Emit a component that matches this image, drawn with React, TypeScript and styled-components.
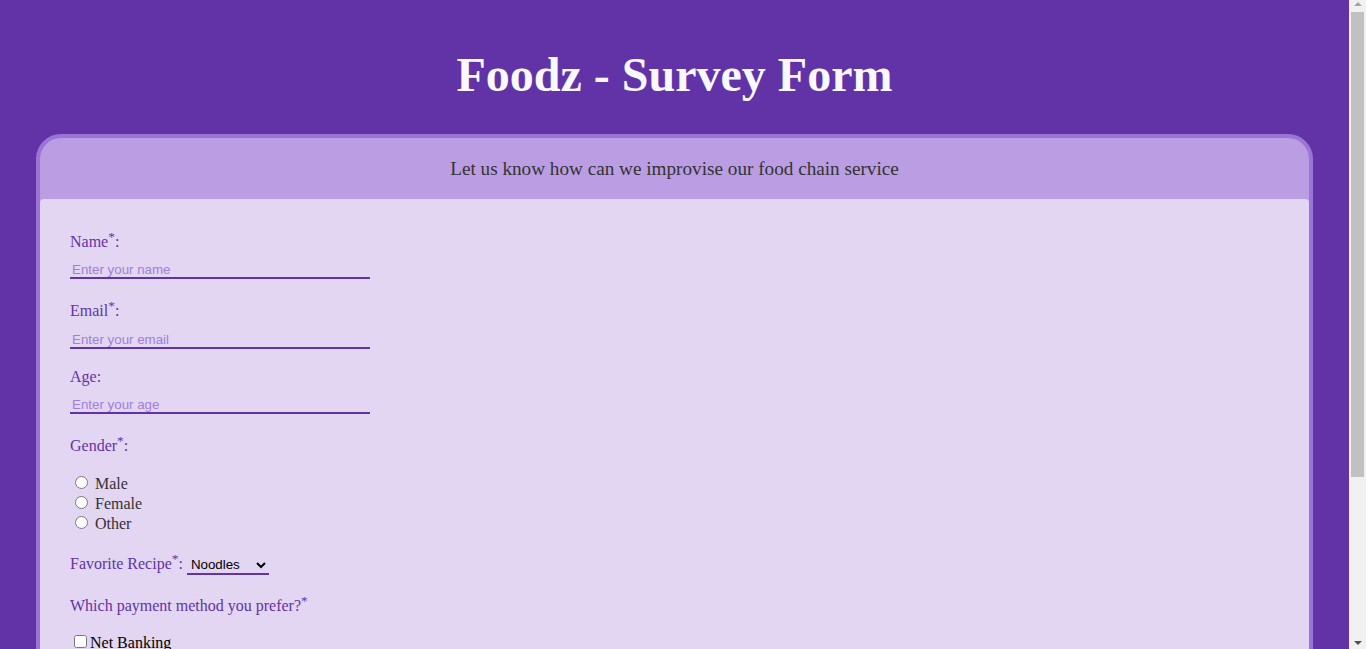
import React, {FC} from 'react';
import styled, {createGlobalStyle} from "styled-components";

//region Colors
const Colors = {
    page: "#6232a7",
    border: "#9b74d6",
    header: "#ba9de3",
    body: "#e2d6f3",
    label: "#6232a7",
    placeholder: "#a07fdb",
    text: "#333333",
};
//endregion

//region Styled
const GlobalStyle = createGlobalStyle`
  html, body {
    margin: 0;
    padding: 0;
  }

  body {
    background-color: ${Colors.page};
    font-family: "Liberation Serif", "Times New Roman", serif;
    font-size: 16px;
  }
`;

const Page = styled.main`
  padding: 0 53px 40px 36px;
`;

const Title = styled.h1`
  margin: 0;
  padding: 45px 0 29px;
  text-align: center;
  color: #f8f8ff;
  font-size: 48px;
  font-weight: bold;
  line-height: 60px;
`;

const Container = styled.section`
  border: 4px solid ${Colors.border};
  border-radius: 25px;
  background-color: ${Colors.header};
  overflow: hidden;
`;

const Header = styled.header`
  padding: 20px 0 19px;
  text-align: center;
  color: ${Colors.text};
  font-size: 19.2px;
  line-height: 22px;
`;

const FormBody = styled.form`
  display: flex;
  flex-direction: column;
  gap: 19px;
  padding: 30px 30px 40px;
  background-color: ${Colors.body};
  border-radius: 4px 4px 0 0;
`;

const Field = styled.div`
  display: flex;
  flex-direction: column;
  align-items: flex-start;
`;

const Label = styled.label`
  color: ${Colors.label};
`;

const Star = styled.sup`
  color: ${Colors.label};
`;

const TextInput = styled.input`
  box-sizing: border-box;
  width: 300px;
  margin-top: 9px;
  padding: 2px 2px 0;
  border: none;
  border-bottom: 2px solid ${Colors.label};
  background: transparent;
  font-family: "Liberation Sans", Arial, sans-serif;
  font-size: 13.333px;
  outline: none;

  &::placeholder {
    color: ${Colors.placeholder};
  }
`;

const OptionList = styled.div<{ $offset: number }>`
  display: flex;
  flex-direction: column;
  margin-top: ${p => p.$offset}px;
`;

const RadioRow = styled.label`
  display: block;
  height: 20px;
  color: ${Colors.text};
  line-height: 20px;
  white-space: pre;
`;

const CheckRow = styled.label`
  display: block;
  height: 19px;
  color: #000;
  line-height: 19px;
`;

const RecipeRow = styled.div`
  height: 23px;
  margin-top: -1px;
`;

const Select = styled.select`
  width: 82px;
  border: none;
  border-bottom: 2px solid ${Colors.label};
  background: transparent;
  font-family: "Liberation Sans", Arial, sans-serif;
  font-size: 13.333px;
  color: #000;
`;

const TextArea = styled.textarea`
  box-sizing: border-box;
  width: 300px;
  height: 60px;
  margin-top: 9px;
  border: 2px solid ${Colors.label};
  background: transparent;
  font-family: "Liberation Sans", Arial, sans-serif;
  font-size: 13.333px;
  resize: none;

  &::placeholder {
    color: ${Colors.placeholder};
  }
`;

const Submit = styled.button`
  align-self: flex-start;
  padding: 8px 24px;
  border: none;
  border-radius: 6px;
  background-color: ${Colors.label};
  color: #fff;
  font-family: "Liberation Serif", serif;
  font-size: 16px;
`;

/* window scrollbar, drawn since the page is photographed without one */
const ScrollTrack = styled.div`
  position: fixed;
  top: 0;
  right: 0;
  bottom: 0;
  width: 17px;
  background-color: #f1f1f1;
  display: flex;
  flex-direction: column;
  align-items: center;
`;

const ScrollArrow = styled.div<{ $down?: boolean }>`
  flex: none;
  width: 0;
  height: 0;
  margin: ${p => p.$down ? "auto 0 4px" : "2px 0 6px"};
  border-left: 4px solid transparent;
  border-right: 4px solid transparent;
  ${p => p.$down
    ? "border-top: 4px solid #505050;"
    : "border-bottom: 4px solid #a3a3a3;"}
`;

const ScrollThumb = styled.div`
  flex: none;
  width: 13px;
  height: 465px;
  margin-left: 2px;
  align-self: flex-start;
  background-color: #c1c1c1;
`;
//endregion

const genders = ["Male", "Female", "Other"];
const payments = ["Net Banking", "Credit / Debit Card", "UPI", "Cash on Delivery"];

const App: FC = () => {
    return (
        <>
            <GlobalStyle/>
            <Page>
                <Title>Foodz - Survey Form</Title>
                <Container>
                    <Header>Let us know how can we improvise our food chain service</Header>
                    <FormBody onSubmit={(e) => e.preventDefault()}>
                        <Field>
                            <Label htmlFor="name">Name<Star>*</Star>:</Label>
                            <TextInput id="name" type="text" placeholder="Enter your name"/>
                        </Field>
                        <Field>
                            <Label htmlFor="email">Email<Star>*</Star>:</Label>
                            <TextInput id="email" type="email" placeholder="Enter your email"/>
                        </Field>
                        <Field>
                            <Label htmlFor="age">Age:</Label>
                            <TextInput id="age" type="number" placeholder="Enter your age"/>
                        </Field>
                        <Field>
                            <Label>Gender<Star>*</Star>:</Label>
                            <OptionList $offset={18}>
                                {genders.map((g) => (
                                    <RadioRow key={g}>
                                        <input type="radio" name="gender" value={g}/> {g}
                                    </RadioRow>
                                ))}
                            </OptionList>
                        </Field>
                        <RecipeRow>
                            <Label htmlFor="recipe">Favorite Recipe<Star>*</Star>: </Label>
                            <Select id="recipe" defaultValue="noodles">
                                <option value="noodles">Noodles</option>
                                <option value="pizza">Pizza</option>
                                <option value="burger">Burger</option>
                                <option value="pasta">Pasta</option>
                            </Select>
                        </RecipeRow>
                        <Field>
                            <Label>Which payment method you prefer?<Star>*</Star></Label>
                            <OptionList $offset={17}>
                                {payments.map((p) => (
                                    <CheckRow key={p}>
                                        <input type="checkbox" value={p}/>{p}
                                    </CheckRow>
                                ))}
                            </OptionList>
                        </Field>
                        <Field>
                            <Label htmlFor="comments">Any suggestions for us?</Label>
                            <TextArea id="comments" placeholder="Write your suggestions"/>
                        </Field>
                        <Submit type="submit">Submit</Submit>
                    </FormBody>
                </Container>
            </Page>
            <ScrollTrack>
                <ScrollArrow/>
                <ScrollThumb/>
                <ScrollArrow $down/>
            </ScrollTrack>
        </>
    );
};

export default App;
